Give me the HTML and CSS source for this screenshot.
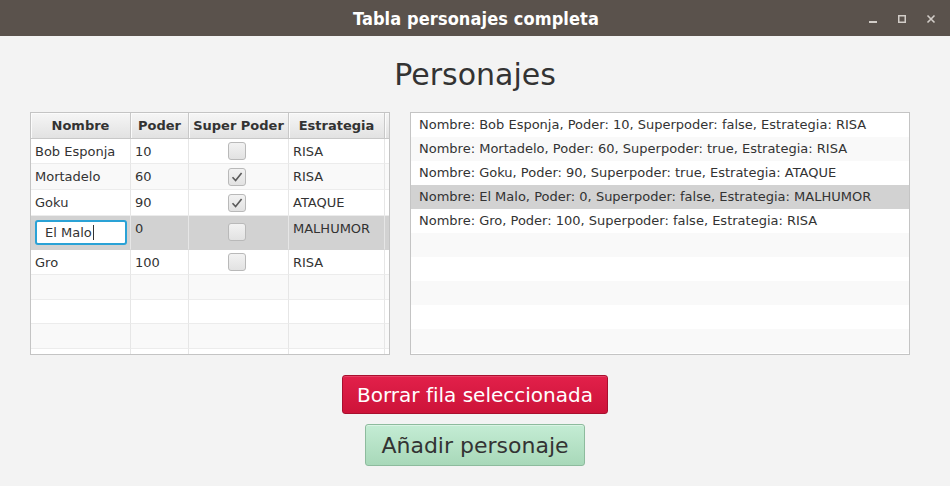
FILE: index.html
```html
<!DOCTYPE html>
<html lang="es">
<head>
<meta charset="utf-8">
<title>Tabla personajes completa</title>
<link rel="stylesheet" href="styles.css">
</head>
<body>
<div class="window">
  <header class="titlebar">
    <div class="title">Tabla personajes completa</div>
    <div class="controls">
      <svg class="ctl" width="10" height="10" viewBox="0 0 10 10"><rect x="1" y="7" width="8" height="2" fill="#d2cdc8"/></svg>
      <svg class="ctl" width="10" height="10" viewBox="0 0 10 10"><rect x="1.75" y="1.75" width="6.5" height="6.5" fill="none" stroke="#d2cdc8" stroke-width="1.5"/></svg>
      <svg class="ctl" width="10" height="10" viewBox="0 0 10 10"><path d="M1.5 1.5 L8.5 8.5 M8.5 1.5 L1.5 8.5" stroke="#d2cdc8" stroke-width="1.6"/></svg>
    </div>
  </header>

  <main class="content">
    <h1 class="heading">Personajes</h1>

    <div class="panes">
      <div class="table">
        <div class="thead">
          <div class="th">Nombre</div>
          <div class="th">Poder</div>
          <div class="th">Super Poder</div>
          <div class="th">Estrategia</div>
          <div class="th filler"></div>
        </div>
        <div class="tbody">
          <div class="tr">
            <div class="td">Bob Esponja</div>
            <div class="td">10</div>
            <div class="td center"><span class="check"></span></div>
            <div class="td">RISA</div>
            <div class="td filler"></div>
          </div>
          <div class="tr odd tall">
            <div class="td">Mortadelo</div>
            <div class="td">60</div>
            <div class="td center"><span class="check"><svg width="18" height="18" viewBox="0 0 18 18"><path d="M4.5 9.2 L7.6 12.6 L13.6 5" fill="none" stroke="#5a5a5a" stroke-width="1.6"/></svg></span></div>
            <div class="td">RISA</div>
            <div class="td filler"></div>
          </div>
          <div class="tr tall">
            <div class="td">Goku</div>
            <div class="td">90</div>
            <div class="td center"><span class="check"><svg width="18" height="18" viewBox="0 0 18 18"><path d="M4.5 9.2 L7.6 12.6 L13.6 5" fill="none" stroke="#5a5a5a" stroke-width="1.6"/></svg></span></div>
            <div class="td">ATAQUE</div>
            <div class="td filler"></div>
          </div>
          <div class="tr selected editing">
            <div class="td edit-cell"><div class="textfield">El Malo<span class="caret"></span></div></div>
            <div class="td top">0</div>
            <div class="td center top"><span class="check"></span></div>
            <div class="td top">MALHUMOR</div>
            <div class="td filler"></div>
          </div>
          <div class="tr">
            <div class="td">Gro</div>
            <div class="td">100</div>
            <div class="td center"><span class="check"></span></div>
            <div class="td">RISA</div>
            <div class="td filler"></div>
          </div>
          <div class="tr odd empty"><div class="td"></div><div class="td"></div><div class="td"></div><div class="td"></div><div class="td filler"></div></div>
          <div class="tr empty"><div class="td"></div><div class="td"></div><div class="td"></div><div class="td"></div><div class="td filler"></div></div>
          <div class="tr odd empty"><div class="td"></div><div class="td"></div><div class="td"></div><div class="td"></div><div class="td filler"></div></div>
          <div class="tr empty"><div class="td"></div><div class="td"></div><div class="td"></div><div class="td"></div><div class="td filler"></div></div>
        </div>
      </div>

      <ul class="list">
        <li class="item">Nombre: Bob Esponja, Poder: 10, Superpoder: false, Estrategia: RISA</li>
        <li class="item odd">Nombre: Mortadelo, Poder: 60, Superpoder: true, Estrategia: RISA</li>
        <li class="item">Nombre: Goku, Poder: 90, Superpoder: true, Estrategia: ATAQUE</li>
        <li class="item selected">Nombre: El Malo, Poder: 0, Superpoder: false, Estrategia: MALHUMOR</li>
        <li class="item">Nombre: Gro, Poder: 100, Superpoder: false, Estrategia: RISA</li>
        <li class="item odd"></li>
        <li class="item"></li>
        <li class="item odd"></li>
        <li class="item"></li>
        <li class="item odd"></li>
      </ul>
    </div>

    <div class="actions">
      <button class="btn btn-delete">Borrar fila seleccionada</button>
      <button class="btn btn-add">Añadir personaje</button>
    </div>
  </main>
</div>
</body>
</html>
```

FILE: styles.css
```css
* { box-sizing: border-box; }

html, body {
  margin: 0;
  padding: 0;
  background: #f3f3f3;
  font-family: "DejaVu Sans", "Liberation Sans", sans-serif;
  color: #333;
}

.window {
  width: 950px;
  height: 486px;
  overflow: hidden;
  display: flex;
  flex-direction: column;
}

.titlebar {
  height: 36px;
  flex: none;
  background: #5a524c;
  display: grid;
  grid-template-columns: 1fr auto 1fr;
  align-items: center;
}

.title {
  grid-column: 2;
  font-family: "DejaVu Sans Condensed", "DejaVu Sans", sans-serif;
  font-stretch: condensed;
  font-weight: bold;
  font-size: 18px;
  color: #ffffff;
  letter-spacing: 0.1px;
  padding-top: 1px;
  padding-left: 2px;
}

.controls {
  grid-column: 3;
  justify-self: end;
  display: flex;
  gap: 19px;
  padding-right: 14px;
  padding-top: 2px;
}

.ctl { display: block; }

.content {
  flex: 1;
  display: flex;
  flex-direction: column;
  align-items: center;
}

.heading {
  margin: 21px 0 19px;
  height: 36px;
  line-height: 36px;
  font-size: 30px;
  font-weight: normal;
  color: #333;
}

.panes {
  display: flex;
  gap: 20px;
  align-self: stretch;
  padding-left: 30px;
}

/* ---------- table ---------- */
.table {
  width: 360px;
  height: 243px;
  border: 1px solid #c4c4c4;
  background: #ffffff;
  overflow: hidden;
  font-size: 13px;
}

.thead, .tr {
  display: grid;
  grid-template-columns: 100px 58px 100px 96px 4px;
}

.thead { height: 26px; }

.th {
  background: linear-gradient(#f6f6f6, #e2e2e2);
  border-right: 1px solid #c8c8c8;
  border-bottom: 1px solid #c8c8c8;
  box-shadow: inset 1px 1px 0 #fbfbfb;
  font-weight: bold;
  text-align: center;
  line-height: 25px;
  color: #333;
}

.th.filler { border-right: none; }

.tr {
  height: 25px;
  background: #ffffff;
}

.tr.tall { height: 26px; }
.tr.odd { background: #f9f9f9; }
.tr.selected { background: #d2d2d2; }
.tr.editing { height: 34px; }
.tr.empty { height: 24.5px; }

.td {
  border-right: 1px solid #e6e6e6;
  border-bottom: 1px solid #ececec;
  padding: 0 4px;
  display: flex;
  align-items: center;
  white-space: nowrap;
  overflow: hidden;
}

.td.filler { border-right: none; padding: 0; }
.td.center { justify-content: center; padding-right: 8px; }
.td.top { align-items: flex-start; padding-top: 5px; }
.td.center.top { padding-top: 7px; }

.tr.selected .td { border-bottom-color: #d2d2d2; }

.check {
  width: 18px;
  height: 18px;
  border: 1px solid #b9b9b9;
  border-radius: 3px;
  background: linear-gradient(#f2f2f2, #e2e2e2);
  display: block;
}

.check svg { display: block; margin: -1px 0 0 -1px; }

.edit-cell {
  align-items: flex-start;
  padding: 4px 3px 0 4px;
}

.textfield {
  width: 92px;
  height: 25px;
  border: 2px solid #2aa2d6;
  border-radius: 3px;
  background: #ffffff;
  padding-left: 8px;
  line-height: 21px;
  display: flex;
  align-items: center;
}

.caret {
  display: inline-block;
  width: 1px;
  height: 15px;
  background: #333;
  margin-left: 1px;
}

/* ---------- list ---------- */
.list {
  list-style: none;
  margin: 0;
  padding: 0;
  width: 500px;
  height: 243px;
  border: 1px solid #c4c4c4;
  background: #ffffff;
  overflow: hidden;
  font-size: 13px;
}

.item {
  height: 24px;
  line-height: 24px;
  padding-left: 8px;
  white-space: nowrap;
  background: #ffffff;
}

.item.odd { background: #f9f9f9; }
.item.selected { background: #d2d2d2; }

/* ---------- buttons ---------- */
.actions {
  display: flex;
  flex-direction: column;
  align-items: center;
  gap: 10px;
  margin-top: 20px;
}

.btn {
  font-family: "DejaVu Sans", "Liberation Sans", sans-serif;
  border-radius: 3px;
  cursor: pointer;
  padding: 0 14px;
}

.btn-delete {
  height: 39px;
  font-size: 20px;
  color: #ffffff;
  background: linear-gradient(#e2204a, #cd1339);
  border: 1px solid #a80f2e;
  box-shadow: inset 0 1px 0 rgba(255,255,255,0.15);
}

.btn-add {
  height: 42px;
  font-size: 22px;
  padding: 0 15px;
  color: #333;
  background: linear-gradient(#c4ecd4, #a8d8b9);
  border: 1px solid #8dbb9d;
  box-shadow: inset 0 1px 0 rgba(255,255,255,0.4);
}
```
